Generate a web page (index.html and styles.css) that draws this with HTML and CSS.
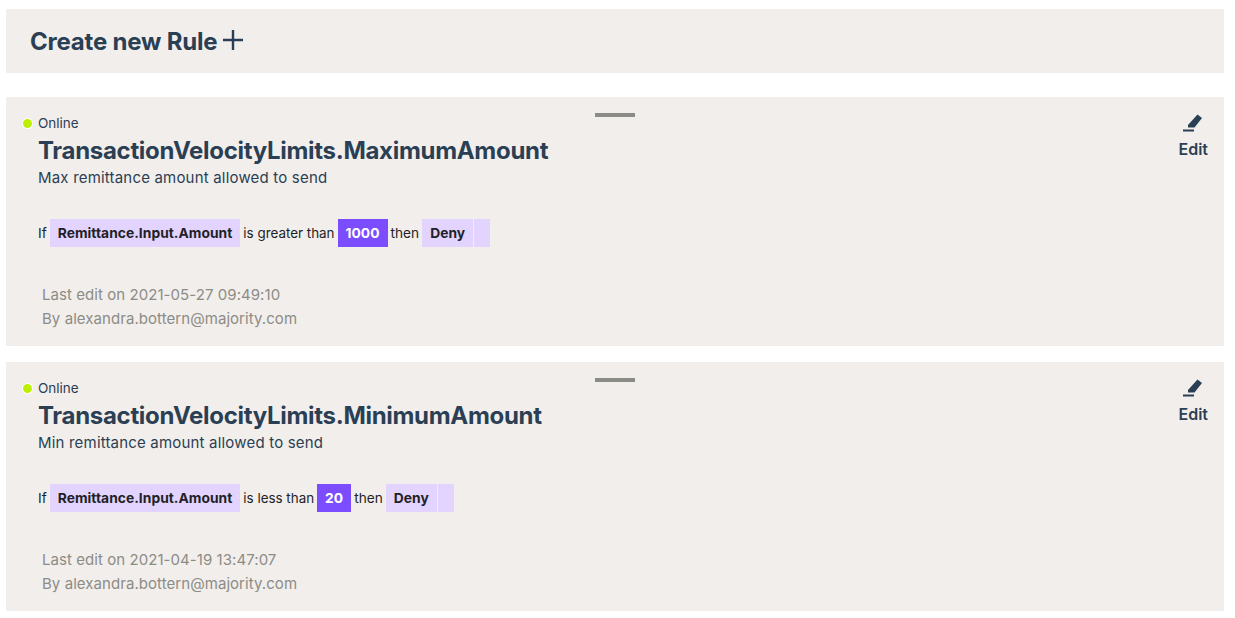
FILE: index.html
```html
<!DOCTYPE html>
<html lang="en">
<head>
<meta charset="utf-8">
<title>Rules</title>
<link rel="stylesheet" href="styles.css">
</head>
<body>
<main class="page">
  <section class="create">
    <h1 class="create-title">Create new Rule</h1>
    <svg class="plus" width="22" height="22" viewBox="0 0 22 22"><path d="M11 1v20M1 11h20" stroke="#2b3f54" stroke-width="2.400" fill="none"/></svg>
  </section>
  <div class="rules">
    <article class="card">
      <div class="handle"></div>
      <div class="edit">
        <svg class="pen" width="20" height="20" viewBox="0 0 20 20"><path d="M5 12 14.500 1.500l4.500 3.500-7.500 9.500H5z" fill="#2b3f54"/><rect x="0" y="16.500" width="11" height="2" fill="#2b3f54"/></svg>
        <span class="edit-label">Edit</span>
      </div>
      <div class="status"><span class="dot"></span><span>Online</span></div>
      <h2 class="name">TransactionVelocityLimits.MaximumAmount</h2>
      <p class="desc">Max remittance amount allowed to send</p>
      <div class="expr">
        <span class="word">If</span>
        <span class="tag tag-field">Remittance.Input.Amount</span>
        <span class="word word-op">is greater than</span>
        <span class="tag tag-value">1000</span>
        <span class="word">then</span>
        <span class="tag tag-action">Deny</span>
        <span class="tag tag-empty"></span>
      </div>
      <div class="meta">
        <div>Last edit on 2021-05-27 09:49:10</div>
        <div>By alexandra.bottern@majority.com</div>
      </div>
    </article>
    <article class="card">
      <div class="handle"></div>
      <div class="edit">
        <svg class="pen" width="20" height="20" viewBox="0 0 20 20"><path d="M5 12 14.500 1.500l4.500 3.500-7.500 9.500H5z" fill="#2b3f54"/><rect x="0" y="16.500" width="11" height="2" fill="#2b3f54"/></svg>
        <span class="edit-label">Edit</span>
      </div>
      <div class="status"><span class="dot"></span><span>Online</span></div>
      <h2 class="name">TransactionVelocityLimits.MinimumAmount</h2>
      <p class="desc">Min remittance amount allowed to send</p>
      <div class="expr">
        <span class="word">If</span>
        <span class="tag tag-field">Remittance.Input.Amount</span>
        <span class="word word-op">is less than</span>
        <span class="tag tag-value">20</span>
        <span class="word">then</span>
        <span class="tag tag-action">Deny</span>
        <span class="tag tag-empty"></span>
      </div>
      <div class="meta">
        <div>Last edit on 2021-04-19 13:47:07</div>
        <div>By alexandra.bottern@majority.com</div>
      </div>
    </article>
  </div>
</main>
</body>
</html>
```
FILE: styles.css
```css
* { box-sizing: border-box; }
html, body { margin: 0; background: #fff; }
body { font-family: Inter, "Liberation Sans", sans-serif; color: #2b3f54; }
.page { padding: 9px 11px 0 6px; }
.create {
  height: 64px; background: #f2eeeb; display: flex; align-items: center;
  padding-left: 24px; gap: 5px; margin-bottom: 24px;
}
.create-title { margin: 2px 0 0; font-size: 24px; font-weight: 700; line-height: 32px; letter-spacing: -0.2px; }
.plus { margin-top: -3px; }
.rules { display: flex; flex-direction: column; gap: 16px; }
.card { position: relative; height: 249px; background: #f2eeeb; padding: 18px 0 0 32px; }
.handle { position: absolute; top: 16px; left: 589px; width: 40px; height: 4px; background: #8c8c86; }
.edit { position: absolute; top: 16px; right: 16px; display: flex; flex-direction: column; align-items: center; }
.pen { display: block; margin-bottom: 6px; }
.edit-label { font-size: 16px; font-weight: 600; line-height: 20px; }
.status { display: flex; align-items: center; font-size: 13.500px; line-height: 16px; margin-left: -15px; gap: 6px; }
.dot { width: 9px; height: 9px; border-radius: 50%; background: #bdf000; box-shadow: 0 0 0 1px #fff; }
.name { margin: 5px 0 0; font-size: 24px; font-weight: 700; line-height: 30px; letter-spacing: -0.3px; }
.desc { margin: 2px 0 0; font-size: 15px; line-height: 20px; letter-spacing: 0.19px; }
.expr { display: flex; align-items: center; margin-top: 31px; height: 28px; font-size: 13.700px; color: #221f26; }
.word { padding: 0 3px; }
.word:first-child { padding: 0 3px 0 0; }
.word-op { padding: 0 3px; font-size: 13.400px; }
.tag { height: 28px; display: flex; align-items: center; justify-content: center; font-size: 13.800px; font-weight: 700; background: #e2d3ff; letter-spacing: 0.04px; }
.tag-field { padding: 0 8px; }
.tag-value { padding: 0 8px; background: #7c4dff; color: #fff; }
.tag-action { padding: 0 8px; }
.tag-empty { width: 16px; margin-left: 1px; }
.meta { margin: 36px 0 0 4px; font-size: 15px; line-height: 24px; color: #8c8c86; letter-spacing: 0.06px; }
```
